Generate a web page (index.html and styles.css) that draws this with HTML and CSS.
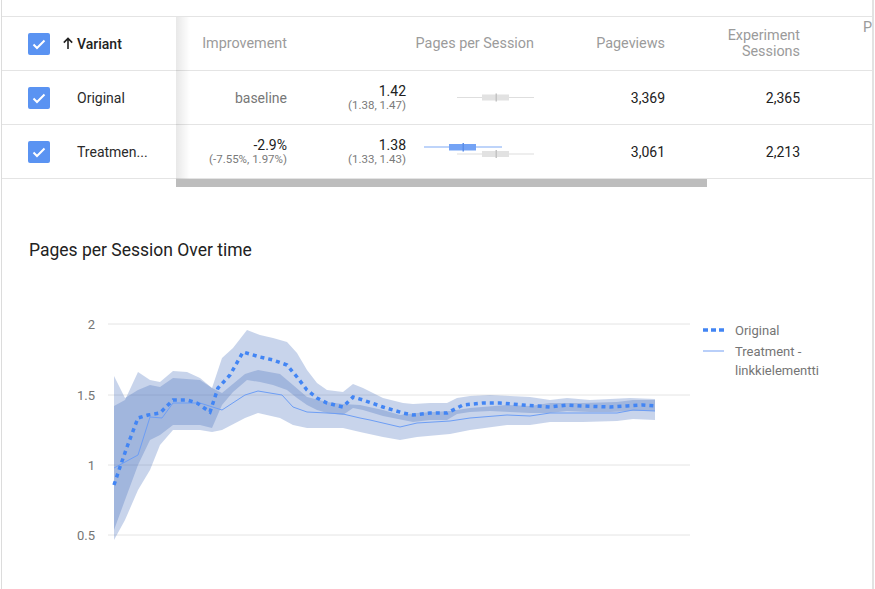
FILE: index.html
```html
<!DOCTYPE html>
<html>
<head>
<meta charset="utf-8">
<link rel="stylesheet" href="styles.css">
</head>
<body>
<div class="page">
  <div class="table">
    <div class="top-gap"></div>
    <div class="grid">
      <div class="fixed">
        <div class="row head">
          <span class="cb"><svg width="22" height="22" viewBox="0 0 22 22"><path d="M5.5 11.5 L9 15 L16.5 7.5" fill="none" stroke="#fff" stroke-width="2"/></svg></span>
          <span class="sort"><svg width="12" height="14" viewBox="0 0 12 14"><path d="M6 13 V2.5 M1.8 6.6 L6 2.4 L10.2 6.6" fill="none" stroke="#222" stroke-width="1.6"/></svg></span>
          <span class="variant-h">Variant</span>
        </div>
        <div class="row">
          <span class="cb"><svg width="22" height="22" viewBox="0 0 22 22"><path d="M5.5 11.5 L9 15 L16.5 7.5" fill="none" stroke="#fff" stroke-width="2"/></svg></span>
          <span class="name">Original</span>
        </div>
        <div class="row">
          <span class="cb"><svg width="22" height="22" viewBox="0 0 22 22"><path d="M5.5 11.5 L9 15 L16.5 7.5" fill="none" stroke="#fff" stroke-width="2"/></svg></span>
          <span class="name">Treatmen...</span>
        </div>
      </div>
      <div class="scroll">
        <div class="row head">
          <div class="c c1">Improvement</div>
          <div class="c c2"></div>
          <div class="c c3">Pages per Session</div>
          <div class="c c4">Pageviews</div>
          <div class="c c5">Experiment<br>Sessions</div>
          <div class="c c6"><div class="l1">Probability to</div><div class="l2">beat</div><div class="l2">baseline</div></div>
        </div>
        <div class="row">
          <div class="c c1 muted">baseline</div>
          <div class="c c2"><div class="val"><div class="main">1.42</div><div class="sub">(1.38, 1.47)</div></div></div>
          <div class="c c3 plot">
            <svg width="128" height="53" viewBox="0 0 128 53">
              <line x1="51" y1="26.5" x2="128" y2="26.5" stroke="#dedede" stroke-width="1.2"/>
              <rect x="76" y="23.5" width="27" height="6" fill="#e2e2e2"/>
              <rect x="89.5" y="22.5" width="1.5" height="8" fill="#c4c4c4"/>
            </svg>
          </div>
          <div class="c c4">3,369</div>
          <div class="c c5">2,365</div>
          <div class="c c6"></div>
        </div>
        <div class="row">
          <div class="c c1"><div class="val"><div class="main">-2.9%</div><div class="sub">(-7.55%, 1.97%)</div></div></div>
          <div class="c c2"><div class="val"><div class="main">1.38</div><div class="sub">(1.33, 1.43)</div></div></div>
          <div class="c c3 plot">
            <svg width="128" height="53" viewBox="0 0 128 53">
              <line x1="18" y1="22" x2="96" y2="22" stroke="#7eaaf6" stroke-width="1.2"/>
              <rect x="43" y="19" width="27" height="6.5" fill="#74a3f5"/>
              <rect x="56.5" y="18" width="1.5" height="8.5" fill="#5b8ee9"/>
              <line x1="51" y1="29" x2="128" y2="29" stroke="#dedede" stroke-width="1.2"/>
              <rect x="76" y="26" width="27" height="6" fill="#e2e2e2"/>
              <rect x="89.5" y="25" width="1.5" height="8" fill="#c4c4c4"/>
            </svg>
          </div>
          <div class="c c4">3,061</div>
          <div class="c c5">2,213</div>
          <div class="c c6"></div>
        </div>
      </div>
    </div>
    <div class="scrollbar"><div class="thumb"></div></div>
  </div>

  <div class="chart">
    <div class="chart-title">Pages per Session Over time</div>
    <svg class="plot-svg" width="870" height="329" viewBox="2 260 870 329">
      <g stroke="#e4e4e4" stroke-width="1">
        <line x1="108" y1="324" x2="690" y2="324"/>
        <line x1="108" y1="395" x2="690" y2="395"/>
        <line x1="108" y1="465" x2="690" y2="465"/>
        <line x1="108" y1="535" x2="690" y2="535"/>
      </g>
      <g class="axis" text-anchor="end">
        <text x="95" y="328.5">2</text>
        <text x="95" y="399.5">1.5</text>
        <text x="95" y="469.5">1</text>
        <text x="95" y="539.5">0.5</text>
      </g>
      <polygon fill="#4a6fbe" fill-opacity="0.3" points="114,406 125,400 138,372 150,380 160,382 173,371 187,372 200,378 212,388 222,358 233,348 247,330 260,335 273,338 287,342 297,353 307,370 317,383 327,390 343,392 353,384 363,388 383,398 403,403 413,404 430,403 447,403 457,398 470,396 490,395 510,396 530,397 550,400 567,398 590,400 610,399 630,398 655,399 655,411 630,411 610,412 590,412 567,411 550,413 530,413 510,412 490,411 470,412 457,414 447,420 430,420 413,422 403,420 383,416 363,410 353,408 343,415 327,413 317,410 307,405 297,398 287,390 273,385 260,382 247,380 233,392 222,405 212,428 200,425 187,425 173,425 160,435 150,440 138,465 125,500 114,530"/>
      <polygon fill="#4a6fbe" fill-opacity="0.3" points="114,376 125,398 138,390 150,385 160,387 173,378 200,380 212,388 222,393 245,374 258,370 280,374 293,385 307,397 327,402 343,404 360,405 383,410 400,415 417,413 450,411 470,408 507,405 530,406 550,403 583,403 617,402 633,400 655,400 655,420 633,419 617,421 583,422 550,422 530,425 507,425 470,430 450,434 417,437 400,440 383,437 360,432 343,428 327,428 307,428 293,425 280,418 258,413 245,418 222,430 212,432 200,430 173,430 160,445 150,470 138,490 125,520 114,540"/>
      <polyline fill="none" stroke="#6d9ef5" stroke-width="1" points="114,468 138,455 150,417 162,418 173,403 200,403 222,410 245,395 258,391 282,395 293,407 307,412 327,413 343,414 360,418 370,420 400,427 417,423 450,421 470,418 507,415 530,416 550,413 583,413 617,413 633,410 655,411"/>
      <polyline fill="none" stroke="#4285f4" stroke-width="3.5" stroke-dasharray="4 4" points="114,485 120,467 127,447 138,418 148,415 160,413 173,400 187,400 197,403 210,412 218,388 230,375 243,352 260,357 273,360 287,365 297,377 307,390 317,398 327,403 343,407 353,397 363,400 383,407 403,413 413,415 430,413 447,413 457,408 463,405 483,403 500,403 523,405 537,406 550,407 567,405 583,406 610,407 627,406 643,405 655,406"/>
      <line x1="703" y1="330" x2="724" y2="330" stroke="#4285f4" stroke-width="3.5" stroke-dasharray="5 3"/>
      <line x1="703" y1="351" x2="724" y2="351" stroke="#8ab0f5" stroke-width="1.2"/>
      <g class="legend">
        <text x="735" y="334.5">Original</text>
        <text x="735" y="355.5">Treatment -</text>
        <text x="735" y="374.5">linkkielementti</text>
      </g>
    </svg>
  </div>
</div>
</body>
</html>
```
FILE: styles.css
```css
html, body {
  margin: 0;
  padding: 0;
  background: #fff;
  overflow: hidden;
}
body {
  font-family: Roboto, "Liberation Sans", Arial, sans-serif;
  color: #212121;
}
.page {
  margin-left: 1px;
  width: 870px;
  height: 589px;
  border-left: 1px solid #dcdcdc;
  border-right: 2px solid #e2e2e2;
  overflow: hidden;
}
.top-gap {
  height: 16px;
  border-bottom: 1px solid #e4e4e4;
}
.grid {
  display: flex;
}
.fixed {
  width: 174px;
  flex: none;
}
.scroll {
  position: relative;
  flex: 1;
  overflow: hidden;
}
.scroll::before {
  content: "";
  position: absolute;
  left: 0;
  top: 0;
  bottom: 0;
  width: 14px;
  background: linear-gradient(to right, rgba(0,0,0,0.09), rgba(0,0,0,0));
  z-index: 1;
}
.row {
  display: flex;
  align-items: center;
  height: 53px;
  border-bottom: 1px solid #e4e4e4;
  font-size: 14px;
}
.scroll .row {
  width: 800px;
}
.cb {
  flex: none;
  width: 22px;
  height: 22px;
  margin-left: 26px;
  border-radius: 2px;
  background: #5a93f2;
  display: flex;
}
.sort {
  display: flex;
  margin-left: 12px;
  margin-top: -1px;
}
.variant-h {
  margin-left: 3px;
  font-weight: 500;
  color: #222;
}
.name {
  margin-left: 27px;
  color: #2a2a2a;
}
.c {
  flex: none;
  text-align: right;
  line-height: 16px;
}
.head .c {
  color: #9b9b9b;
  font-size: 14.4px;
}
.head .c5 {
  margin-top: 1px;
}
.c1 { width: 111px; }
.c2 { width: 119px; }
.c3 { width: 128px; }
.c4 { width: 131px; }
.c5 { width: 135px; }
.c6 {
  width: 160px;
  text-align: left;
  padding-left: 63px;
  white-space: nowrap;
}
.c6 .l2 {
  padding-left: 48px;
}
.plot {
  height: 53px;
}
.plot svg {
  display: block;
}
.muted {
  color: #777;
}
.val .main {
  line-height: 16px;
  color: #212121;
}
.val .sub {
  font-size: 11.5px;
  line-height: 13px;
  color: #7a7a7a;
}
.scrollbar {
  height: 8px;
}
.thumb {
  margin-left: 174px;
  width: 531px;
  height: 8px;
  background: #bdbdbd;
}
.chart {
  padding-top: 53px;
}
.chart-title {
  margin-left: 27px;
  font-size: 17.5px;
  line-height: 20px;
  color: #222;
}
.plot-svg {
  display: block;
}
.axis text {
  font-family: Roboto, "Liberation Sans", sans-serif;
  font-size: 13px;
  fill: #757575;
}
.legend text {
  font-family: Roboto, "Liberation Sans", sans-serif;
  font-size: 13px;
  fill: #757575;
}
```
